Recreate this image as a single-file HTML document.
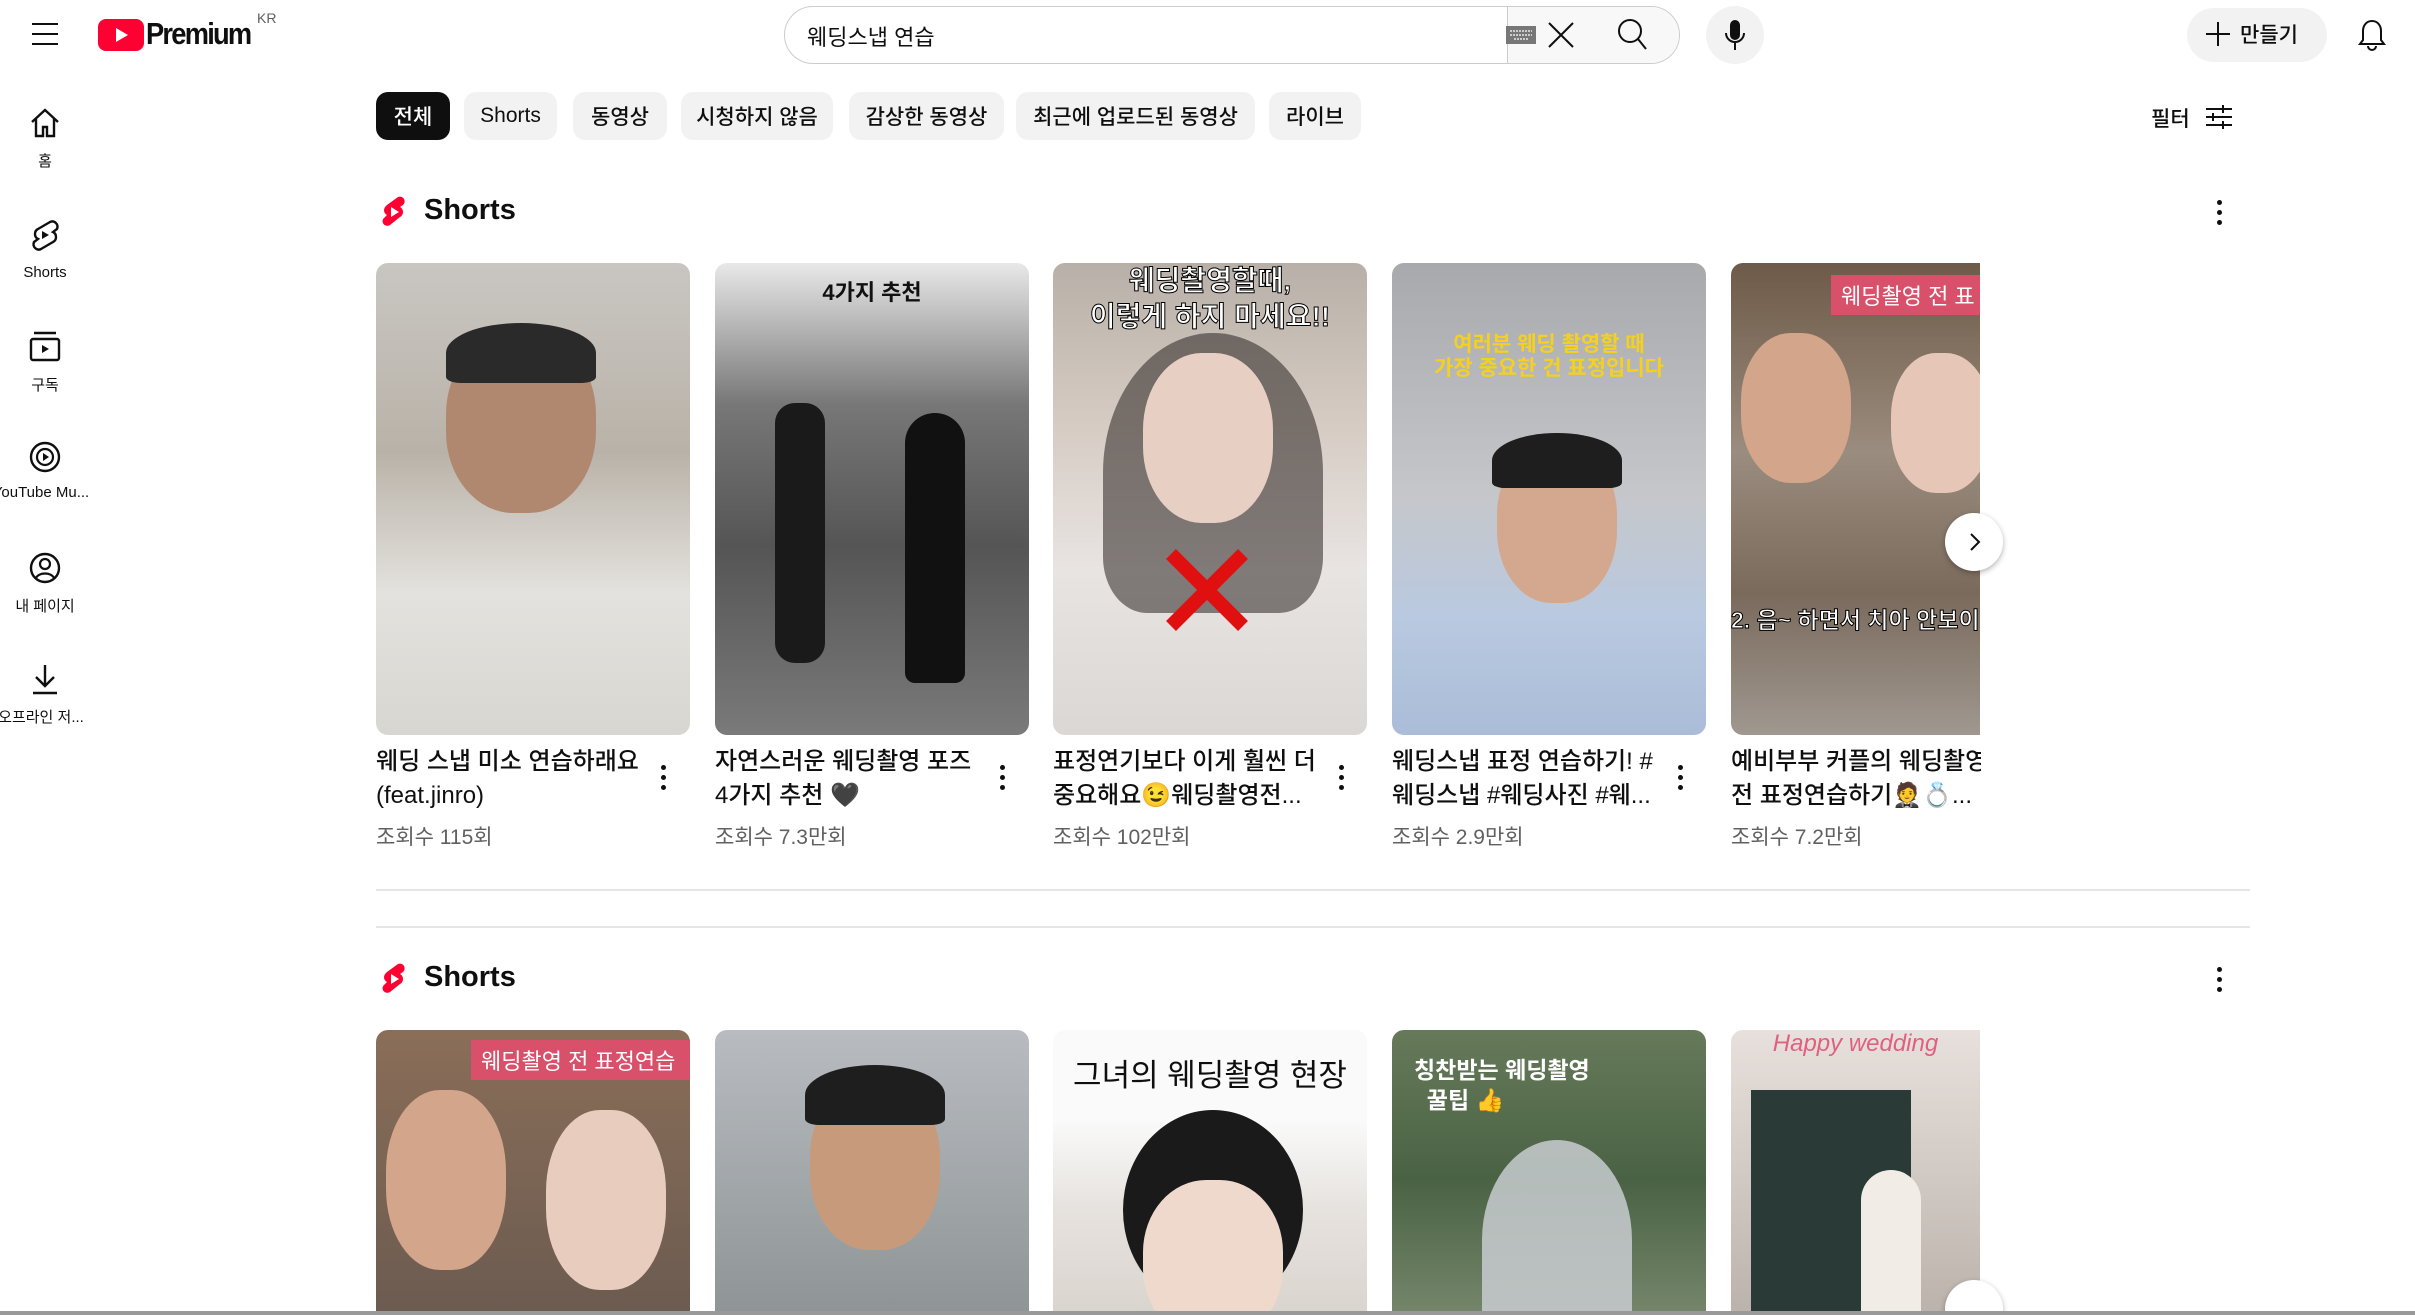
<!DOCTYPE html>
<html style="overflow:hidden;height:1315px"><head><meta charset="utf-8"><style>
*{box-sizing:border-box;margin:0;padding:0}
body{width:2415px;height:1315px;overflow:hidden;background:#fff;font-family:"Liberation Sans","Noto Sans CJK KR",sans-serif;color:#0f0f0f;position:relative}
.a{position:absolute}
.chip{position:absolute;top:92px;height:48px;border-radius:12px;background:#f2f2f2;font-size:21px;font-weight:500;display:flex;align-items:center;justify-content:center}
.side{position:absolute;left:0;width:90px;text-align:center;font-size:15px;color:#0f0f0f}
.side svg{display:block;margin:0 auto}
.th{position:absolute;width:314px;border-radius:12px;overflow:hidden}
.t{position:absolute;font-size:24px;line-height:34px;width:270px;font-weight:500;white-space:nowrap}
.v{position:absolute;font-size:21px;color:#606060}
.k{position:absolute;width:6px}
.k i{display:block;width:5px;height:5px;border-radius:50%;background:#0f0f0f;margin-bottom:5px}
.ov{position:absolute;left:0;right:0;text-align:center;font-weight:bold;font-size:24px}
</style></head><body>
<svg class="a" style="left:30px;top:21px" width="30" height="26"><path d="M2 3h26M2 13h26M2 23h26" stroke="#0f0f0f" stroke-width="2"/></svg>
<svg class="a" style="left:98px;top:19px" width="46" height="32"><rect width="46" height="32" rx="8" fill="#ff0033"/><path d="M18 9l12 7-12 7z" fill="#fff"/></svg>
<div class="a" style="left:146px;top:16px;font-size:31px;font-weight:bold;letter-spacing:-2px;transform:scaleX(.88);transform-origin:left">Premium</div>
<div class="a" style="left:257px;top:10px;font-size:14px;color:#606060">KR</div>
<div class="a" style="left:784px;top:6px;width:896px;height:58px;border:1.5px solid #ccc;border-radius:29px;overflow:hidden">
 <div class="a" style="left:22px;top:13px;font-size:22px">웨딩스냅 연습</div>
 <div class="a" style="left:722px;top:0;width:174px;height:58px;background:#f8f8f8;border-left:1.5px solid #ccc"></div>
</div>
<svg class="a" style="left:1506px;top:26px" width="30" height="20"><rect width="30" height="18" fill="#777"/><path d="M4 5h22M4 9h22M8 13h14" stroke="#ccc" stroke-width="2" stroke-dasharray="2 1"/></svg>
<svg class="a" style="left:1546px;top:20px" width="30" height="30"><path d="M3 3l24 24M27 3L3 27" stroke="#0f0f0f" stroke-width="2"/></svg>
<svg class="a" style="left:1617px;top:18px" width="32" height="34"><circle cx="13" cy="13" r="11" fill="none" stroke="#0f0f0f" stroke-width="2"/><path d="M21 21l8 10" stroke="#0f0f0f" stroke-width="2"/></svg>
<div class="a" style="left:1706px;top:6px;width:58px;height:58px;border-radius:50%;background:#f2f2f2"></div>
<svg class="a" style="left:1722px;top:18px" width="26" height="34"><rect x="8" y="2" width="10" height="20" rx="5" fill="#0f0f0f"/><path d="M4 15a9 9 0 0 0 18 0M13 24v8" stroke="#0f0f0f" stroke-width="2" fill="none"/></svg>
<div class="a" style="left:2187px;top:8px;width:140px;height:54px;border-radius:27px;background:#f2f2f2"></div>
<svg class="a" style="left:2204px;top:20px" width="28" height="28"><path d="M14 2v24M2 14h24" stroke="#0f0f0f" stroke-width="2"/></svg>
<div class="a" style="left:2240px;top:19px;font-size:21px;font-weight:500">만들기</div>
<svg class="a" style="left:2357px;top:18px" width="30" height="34"><path d="M15 3c-6 0-9 5-9 10v9l-3 4h24l-3-4v-9c0-5-3-10-9-10zM11 28a4 4 0 0 0 8 0" stroke="#0f0f0f" stroke-width="2" fill="none"/></svg>
<div class="side" style="top:106px"><svg width="34" height="34"><path d="M4 16L17 4l13 12M8 13v17h7v-9h4v9h7V13" stroke="#0f0f0f" stroke-width="2.4" fill="none"/></svg><div style="margin-top:10px">홈</div></div>
<div class="side" style="top:218px"><svg width="34" height="36"><path d="M22 4c4-2 9 2 7 7l-4 3c4 2 4 8 0 10l-12 7c-4 2-9-2-7-7l4-3c-4-2-4-8 0-10z" stroke="#0f0f0f" stroke-width="2.4" fill="none"/><path d="M14 13l7 4-7 4z" fill="#0f0f0f"/></svg><div style="margin-top:10px">Shorts</div></div>
<div class="side" style="top:330px"><svg width="34" height="34"><path d="M6 3h22" stroke="#0f0f0f" stroke-width="2.4"/><rect x="3" y="9" width="28" height="21" rx="2" stroke="#0f0f0f" stroke-width="2.4" fill="none"/><path d="M14 15l7 4-7 4z" fill="#0f0f0f"/></svg><div style="margin-top:10px">구독</div></div>
<div class="side" style="top:440px"><svg width="34" height="34"><circle cx="17" cy="17" r="14" stroke="#0f0f0f" stroke-width="2.4" fill="none"/><circle cx="17" cy="17" r="8" stroke="#0f0f0f" stroke-width="2.2" fill="none"/><path d="M15 13l6 4-6 4z" fill="#0f0f0f"/></svg><div style="margin-top:10px;white-space:nowrap;margin-left:-8px">YouTube Mu...</div></div>
<div class="side" style="top:551px"><svg width="34" height="34"><circle cx="17" cy="17" r="14" stroke="#0f0f0f" stroke-width="2.4" fill="none"/><circle cx="17" cy="13" r="5" stroke="#0f0f0f" stroke-width="2.2" fill="none"/><path d="M8 27c3-6 15-6 18 0" stroke="#0f0f0f" stroke-width="2.2" fill="none"/></svg><div style="margin-top:10px">내 페이지</div></div>
<div class="side" style="top:662px"><svg width="34" height="34"><path d="M17 3v20M8 15l9 9 9-9M5 31h24" stroke="#0f0f0f" stroke-width="2.4" fill="none"/></svg><div style="margin-top:10px;white-space:nowrap;margin-left:-8px">오프라인 저...</div></div>
<div class="chip" style="left:376px;width:74px;background:#0f0f0f;color:#fff">전체</div>
<div class="chip" style="left:464px;width:93px">Shorts</div>
<div class="chip" style="left:573px;width:94px">동영상</div>
<div class="chip" style="left:681px;width:152px">시청하지 않음</div>
<div class="chip" style="left:849px;width:155px">감상한 동영상</div>
<div class="chip" style="left:1016px;width:239px">최근에 업로드된 동영상</div>
<div class="chip" style="left:1269px;width:92px">라이브</div>
<div class="a" style="left:2151px;top:103px;font-size:21px;font-weight:500">필터</div>
<svg class="a" style="left:2204px;top:104px" width="30" height="26"><path d="M2 5h26M2 13h26M2 21h26" stroke="#0f0f0f" stroke-width="2"/><path d="M19 1v8M9 9v8M19 17v8" stroke="#0f0f0f" stroke-width="2"/></svg>
<svg class="a" style="left:380px;top:195px" width="28" height="34"><path d="M18 2c5-2 9 4 5 8l-3 2c4 2 4 8 0 10l-10 8c-5 3-10-3-6-7l3-3c-4-2-4-7 0-10z" fill="#ff0033"/><path d="M11 12l8 5-8 5z" fill="#fff"/></svg>
<div class="a" style="left:424px;top:194px;font-size:29px;font-weight:bold">Shorts</div>
<div class="k" style="left:2217px;top:200px"><i></i><i></i><i></i></div>

<div class="th" style="left:376px;top:263px;height:472px;background:linear-gradient(180deg,#c9c6c2 0%,#b9b2a8 40%,#e4e2de 70%,#d8d6d0 100%)">
 <div class="a" style="left:70px;top:70px;width:150px;height:180px;border-radius:45%;background:#b08870"></div>
 <div class="a" style="left:70px;top:60px;width:150px;height:60px;border-radius:50% 50% 10% 10%;background:#2a2a2a"></div>
</div>
<div class="th" style="left:715px;top:263px;height:472px;background:linear-gradient(180deg,#e8e8e8 0%,#777 30%,#555 60%,#7a7a7a 100%)">
 <div class="ov" style="top:12px;font-size:22px;color:#111">4가지 추천</div>
 <div class="a" style="left:60px;top:140px;width:50px;height:260px;background:#1a1a1a;border-radius:20px"></div>
 <div class="a" style="left:190px;top:150px;width:60px;height:270px;background:#111;border-radius:30px 30px 10px 10px"></div>
</div>
<div class="th" style="left:1053px;top:263px;height:472px;background:linear-gradient(180deg,#b8b0a8 0%,#d6ccc4 35%,#e8e4e2 65%,#dad7d5 100%)">
 <div class="ov" style="top:0;color:#fff;-webkit-text-stroke:1px #000;font-size:28px;line-height:36px">웨딩촬영할때,<br>이렇게 하지 마세요!!</div>
 <div class="a" style="left:50px;top:70px;width:220px;height:280px;border-radius:50% 50% 20% 20%;background:#2a2220;opacity:.55"></div>
 <div class="a" style="left:90px;top:90px;width:130px;height:170px;border-radius:45%;background:#e8cfc4"></div>
 <svg class="a" style="left:112px;top:285px" width="84" height="84"><path d="M6 6l72 72M78 6L6 78" stroke="#e01010" stroke-width="14"/></svg>
</div>
<div class="th" style="left:1392px;top:263px;height:472px;background:linear-gradient(180deg,#a7a9ad 0%,#c5c7cb 50%,#b9c9e0 75%,#aabcd8 100%)">
 <div class="ov" style="top:70px;color:#f5d020;font-size:21px;line-height:24px">여러분 웨딩 촬영할 때<br>가장 중요한 건 표정입니다</div>
 <div class="a" style="left:105px;top:180px;width:120px;height:160px;border-radius:45%;background:#d4a88e"></div>
 <div class="a" style="left:100px;top:170px;width:130px;height:55px;border-radius:50% 50% 10% 10%;background:#1e1e1e"></div>
</div>
<div class="th" style="left:1731px;top:263px;width:249px;height:472px;border-radius:12px 0 0 12px;background:linear-gradient(180deg,#6e5a48 0%,#9a8c7e 40%,#7a6a5c 70%,#a09890 100%)">
 <div class="a" style="left:100px;top:12px;width:160px;height:40px;background:#d8506a;color:#fff;font-size:22px;padding:4px 10px">웨딩촬영 전 표</div>
 <div class="a" style="left:10px;top:70px;width:110px;height:150px;border-radius:45%;background:#d3a58a"></div>
 <div class="a" style="left:160px;top:90px;width:100px;height:140px;border-radius:45%;background:#e6c6b6"></div>
 <div class="a" style="left:0;top:338px;color:#fff;font-size:23px;font-weight:bold;-webkit-text-stroke:1px #000;white-space:nowrap">2. 음~ 하면서 치아 안보이</div>
</div>
<div class="a" style="left:1945px;top:513px;width:58px;height:58px;border-radius:50%;background:#fff;box-shadow:0 2px 6px rgba(0,0,0,.3)"></div>
<svg class="a" style="left:1965px;top:531px" width="20" height="22"><path d="M6 3l8 8-8 8" stroke="#0f0f0f" stroke-width="2" fill="none"/></svg>

<div class="t" style="left:376px;top:745px">웨딩 스냅 미소 연습하래요<br>(feat.jinro)</div>
<div class="t" style="left:715px;top:745px">자연스러운 웨딩촬영 포즈<br>4가지 추천 🖤</div>
<div class="t" style="left:1053px;top:745px">표정연기보다 이게 훨씬 더<br>중요해요😉웨딩촬영전...</div>
<div class="t" style="left:1392px;top:745px">웨딩스냅 표정 연습하기! #<br>웨딩스냅 #웨딩사진 #웨...</div>
<div class="t" style="left:1731px;top:745px;width:250px;overflow:hidden">예비부부 커플의 웨딩촬영<br>전 표정연습하기🤵💍...</div>
<div class="k" style="left:661px;top:765px"><i></i><i></i><i></i></div>
<div class="k" style="left:1000px;top:765px"><i></i><i></i><i></i></div>
<div class="k" style="left:1339px;top:765px"><i></i><i></i><i></i></div>
<div class="k" style="left:1678px;top:765px"><i></i><i></i><i></i></div>
<div class="v" style="left:376px;top:821px">조회수 115회</div>
<div class="v" style="left:715px;top:821px">조회수 7.3만회</div>
<div class="v" style="left:1053px;top:821px">조회수 102만회</div>
<div class="v" style="left:1392px;top:821px">조회수 2.9만회</div>
<div class="v" style="left:1731px;top:821px">조회수 7.2만회</div>

<div class="a" style="left:376px;top:889px;width:1874px;height:2px;background:#e5e5e5"></div>
<div class="a" style="left:376px;top:926px;width:1874px;height:2px;background:#e5e5e5"></div>

<svg class="a" style="left:380px;top:962px" width="28" height="34"><path d="M18 2c5-2 9 4 5 8l-3 2c4 2 4 8 0 10l-10 8c-5 3-10-3-6-7l3-3c-4-2-4-7 0-10z" fill="#ff0033"/><path d="M11 12l8 5-8 5z" fill="#fff"/></svg>
<div class="a" style="left:424px;top:961px;font-size:29px;font-weight:bold">Shorts</div>
<div class="k" style="left:2217px;top:967px"><i></i><i></i><i></i></div>

<div class="th" style="left:376px;top:1030px;height:300px;background:linear-gradient(180deg,#8a6e58,#6a5a50)">
 <div class="a" style="left:95px;top:10px;width:230px;height:40px;background:#d8506a;color:#fff;font-size:22px;padding:4px 10px;white-space:nowrap">웨딩촬영 전 표정연습</div>
 <div class="a" style="left:10px;top:60px;width:120px;height:180px;border-radius:45%;background:#d3a58a"></div>
 <div class="a" style="left:170px;top:80px;width:120px;height:180px;border-radius:45%;background:#e8ccbd"></div>
</div>
<div class="th" style="left:715px;top:1030px;height:300px;background:linear-gradient(180deg,#b8bcc0,#8c9294)">
 <div class="a" style="left:95px;top:50px;width:130px;height:170px;border-radius:45%;background:#c89a7c"></div>
 <div class="a" style="left:90px;top:35px;width:140px;height:60px;border-radius:50% 50% 10% 10%;background:#1e1e1e"></div>
</div>
<div class="th" style="left:1053px;top:1030px;height:300px;background:linear-gradient(180deg,#fafafa 0 30%,#e6e2de 60%,#d8d2cc)">
 <div class="ov" style="top:20px;font-weight:normal;font-size:31px">그녀의 웨딩촬영 현장</div>
 <div class="a" style="left:70px;top:80px;width:180px;height:200px;border-radius:50%;background:#1a1a1a"></div>
 <div class="a" style="left:90px;top:150px;width:140px;height:160px;border-radius:45%;background:#efd9cc"></div>
</div>
<div class="th" style="left:1392px;top:1030px;height:300px;background:linear-gradient(180deg,#667a5a,#4a6244 50%,#7a8a70)">
 <div class="a" style="left:22px;top:25px;color:#fff;font-size:23px;line-height:30px;font-weight:bold">칭찬받는 웨딩촬영<br>&nbsp;&nbsp;꿀팁 👍</div>
 <div class="a" style="left:90px;top:110px;width:150px;height:200px;border-radius:50% 50% 10% 10%;background:#c8ccd0;opacity:.85"></div>
</div>
<div class="th" style="left:1731px;top:1030px;width:249px;height:300px;border-radius:12px 0 0 12px;background:linear-gradient(180deg,#e8e0dc,#b8b0a8)">
 <div class="ov" style="top:0;color:#e06080;font-style:italic;font-weight:normal">Happy wedding</div>
 <div class="a" style="left:20px;top:60px;width:160px;height:240px;background:#2a3a36"></div>
 <div class="a" style="left:130px;top:140px;width:60px;height:160px;border-radius:30px 30px 0 0;background:#f2ece6"></div>
</div>
<div class="a" style="left:1945px;top:1280px;width:58px;height:58px;border-radius:50%;background:#fff;box-shadow:0 2px 6px rgba(0,0,0,.3)"></div>
<div class="a" style="left:0;top:1311px;width:2415px;height:4px;background:#999"></div>
</body></html>
